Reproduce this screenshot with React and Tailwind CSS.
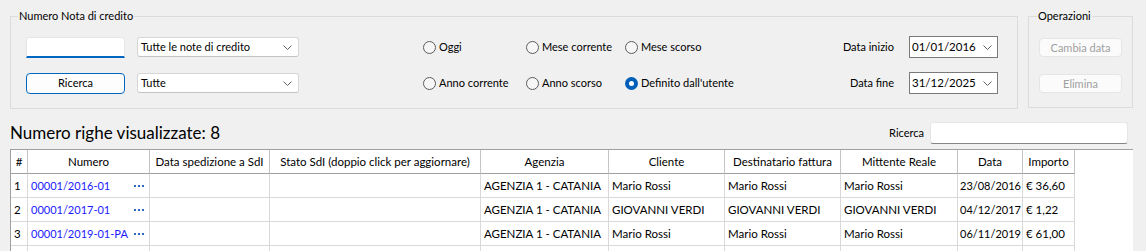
import React from 'react';

// righe della griglia (la quarta è tagliata dal bordo della finestra)
const rows = [
  ['1', '00001/2016-01', '', '', 'AGENZIA 1 - CATANIA', 'Mario Rossi', 'Mario Rossi', 'Mario Rossi', '23/08/2016', '€ 36,60'],
  ['2', '00001/2017-01', '', '', 'AGENZIA 1 - CATANIA', 'GIOVANNI VERDI', 'GIOVANNI VERDI', 'GIOVANNI VERDI', '04/12/2017', '€ 1,22'],
  ['3', '00001/2019-01-PA', '', '', 'AGENZIA 1 - CATANIA', 'Mario Rossi', 'Mario Rossi', 'Mario Rossi', '06/11/2019', '€ 61,00'],
  ['', '', '', '', '', '', '', '', '', ''],
];

const headers = [
  '#',
  'Numero',
  'Data spedizione a SdI',
  'Stato SdI (doppio click per aggiornare)',
  'Agenzia',
  'Cliente',
  'Destinatario fattura',
  'Mittente Reale',
  'Data',
  'Importo',
];

function Chevron() {
  return (
    <svg width="9" height="5" viewBox="0 0 9 5" className="shrink-0">
      <polyline points="0.5,0.5 4.5,4.5 8.5,0.5" fill="none" stroke="#606060" strokeWidth="1" />
    </svg>
  );
}

function Combo({ value }) {
  return (
    <div className="h-[20px] w-full flex items-center justify-between pl-[3px] pr-[6px] bg-white border border-[#d6d6d6] border-b-[#c4c4c4] rounded-[3px]">
      <span>{value}</span>
      <Chevron />
    </div>
  );
}

function DateBox({ value }) {
  return (
    <div className="h-[22px] w-full flex items-center justify-between pl-[2px] pr-[5px] bg-white border border-[#7a7a7a]">
      <span className="text-[11.5px]">{value}</span>
      <Chevron />
    </div>
  );
}

function Radio({ label, checked }) {
  return (
    <div className="h-[24px] flex items-center gap-[3px]">
      {checked ? (
        <span className="w-[13px] h-[13px] rounded-full bg-[#005fb8] flex items-center justify-center">
          <span className="w-[5px] h-[5px] rounded-full bg-white" />
        </span>
      ) : (
        <span className="w-[13px] h-[13px] rounded-full border border-[#5c5c5c] bg-[#f6f6f6]" />
      )}
      <span>{label}</span>
    </div>
  );
}

export default function App() {
  return (
    <div className="w-[1146px] h-[251px] overflow-hidden bg-[#f0f0f0] text-[#000] font-['Lato',sans-serif] text-[11px] leading-[16px]">
      {/* filtri */}
      <div className="h-[117px] flex pl-[10px] pt-[8px]">
        <fieldset className="w-[1008px] h-[101px] border border-[#dcdcdc]">
          <legend className="ml-[7px] px-[1px] leading-[16px]">Numero Nota di credito</legend>
          <div className="flex pt-[11px] pl-[15px]">
            <div className="w-[99px] flex flex-col gap-[12px]">
              <div className="h-[24px] flex items-center">
                <div className="h-[21px] w-full bg-white border border-[#e6e6e6] border-b-2 border-b-[#0067c0] rounded-t-[3px]" />
              </div>
              <div className="h-[24px] flex items-center">
                <button className="h-[21px] w-full bg-[#fdfdfd] border border-[#0067c0] rounded-[4px] text-center">Ricerca</button>
              </div>
            </div>
            <div className="ml-[12px] w-[162px] flex flex-col gap-[12px]">
              <div className="h-[24px] flex items-center">
                <Combo value="Tutte le note di credito" />
              </div>
              <div className="h-[24px] flex items-center">
                <Combo value="Tutte" />
              </div>
            </div>
            <div className="ml-[124px] w-[103px] flex flex-col gap-[12px]">
              <Radio label="Oggi" />
              <Radio label="Anno corrente" />
            </div>
            <div className="w-[99px] flex flex-col gap-[12px]">
              <Radio label="Mese corrente" />
              <Radio label="Anno scorso" />
            </div>
            <div className="w-[209px] flex flex-col gap-[12px]">
              <Radio label="Mese scorso" />
              <Radio label="Definito dall'utente" checked />
            </div>
            <div className="w-[60px] flex flex-col gap-[12px] text-right">
              <div className="h-[24px] flex items-center justify-end">Data inizio</div>
              <div className="h-[24px] flex items-center justify-end">Data fine</div>
            </div>
            <div className="ml-[15px] w-[89px] flex flex-col gap-[12px]">
              <div className="h-[24px] flex items-center">
                <DateBox value="01/01/2016" />
              </div>
              <div className="h-[24px] flex items-center">
                <DateBox value="31/12/2025" />
              </div>
            </div>
          </div>
        </fieldset>

        <fieldset className="ml-[10px] w-[105px] h-[100px] border border-[#dcdcdc]">
          <legend className="ml-[8px] px-[1px] leading-[16px]">Operazioni</legend>
          <div className="flex flex-col pl-[10px] pt-[14px] gap-[17px]">
            <button className="h-[19px] w-[83px] bg-[#fbfbfb] border border-[#e5e5e5] rounded-[4px] text-[#a0a0a0]">Cambia data</button>
            <button className="h-[19px] w-[83px] bg-[#fbfbfb] border border-[#e5e5e5] rounded-[4px] text-[#a0a0a0]">Elimina</button>
          </div>
        </fieldset>
      </div>

      {/* riepilogo e ricerca */}
      <div className="h-[32px] flex items-center pl-[10px] pr-[18px]">
        <span className="text-[17px] leading-[20px]">Numero righe visualizzate: 8</span>
        <span className="ml-auto">Ricerca</span>
        <div className="ml-[6px] w-[198px] h-[22px] bg-white border border-[#e6e6e6] border-b-[#868686] rounded-[3px]" />
      </div>

      {/* griglia */}
      <div className="ml-[10px] w-[1123px] h-[110px] bg-white border-l border-t border-[#a0a0a0] text-[11.5px]">
        <div className="grid grid-cols-[17px_122px_120px_211px_128px_116px_116px_117px_65px_52px] w-[1064px]">
          {headers.map((h) => (
            <div key={h} className="h-[24px] flex items-center justify-center border-r border-r-[#c4c4c4] border-b border-b-[#a0a0a0] whitespace-nowrap">
              {h}
            </div>
          ))}
          {rows.map((r, ri) =>
            r.map((c, i) => (
              <div
                key={ri + '-' + i}
                className={
                  i === 8
                    ? 'h-[24px] flex items-center border-r border-b border-[#d9d9d9] whitespace-nowrap overflow-hidden pl-[2px] text-[11px]'
                    : 'h-[24px] flex items-center border-r border-b border-[#d9d9d9] whitespace-nowrap overflow-hidden px-[3px]'
                }
              >
                {i === 1 && c ? (
                  <div className="w-full flex items-center justify-between pr-[2px]">
                    <span className="text-[#1a1aff] text-[11px]">{c}</span>
                    <span className="flex gap-[2px]">
                      <span className="w-[2px] h-[2px] bg-[#2f6ac4]" />
                      <span className="w-[2px] h-[2px] bg-[#2f6ac4]" />
                      <span className="w-[2px] h-[2px] bg-[#2f6ac4]" />
                    </span>
                  </div>
                ) : (
                  c
                )}
              </div>
            ))
          )}
        </div>
      </div>
    </div>
  );
}
